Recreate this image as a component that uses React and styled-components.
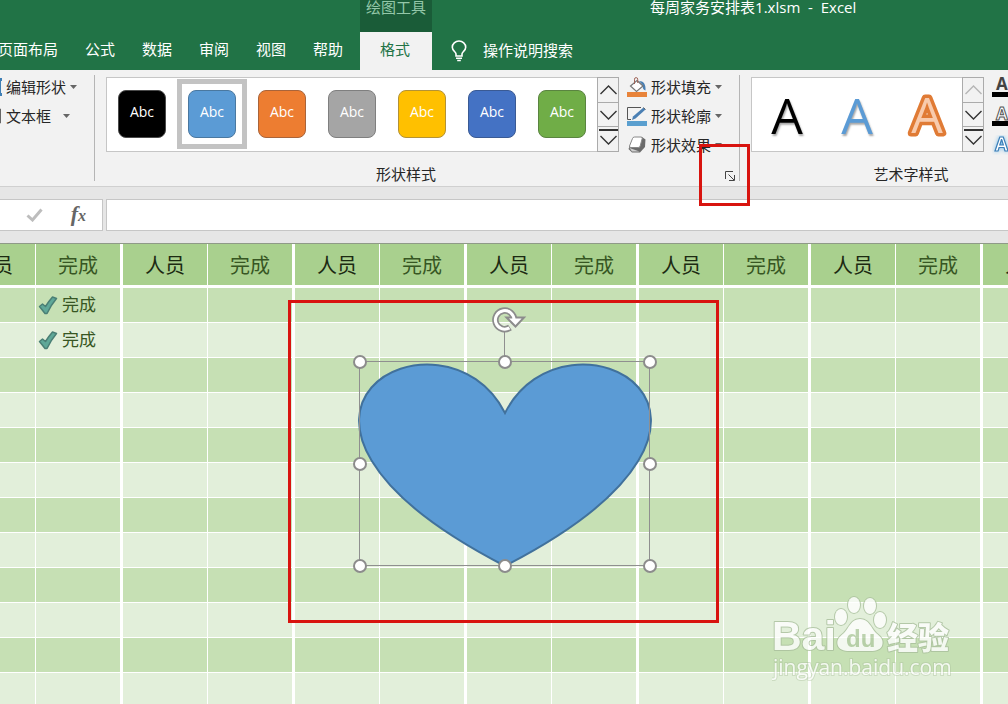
import React from 'react';
import styled, { createGlobalStyle } from 'styled-components';

const GlobalStyle = createGlobalStyle`
  * {
    box-sizing: border-box;
  }

  body {
    margin: 0;
    overflow: hidden;
    font-family: 'Open Sans', 'Noto Sans CJK SC', sans-serif;
    font-size: 15px;
    color: #262626;
  }

  button,
  input {
    font: inherit;
    color: inherit;
    border: none;
    padding: 0;
    background: none;
  }
`;

const tabs = ['页面布局', '公式', '数据', '审阅', '视图', '帮助'];

const shapeStyles = [
  { name: 'black', fill: '#000000', line: '#4a4a4a' },
  { name: 'blue', fill: '#5b9bd5', line: '#4a78a0', selected: true },
  { name: 'orange', fill: '#ed7d31', line: '#a9643a' },
  { name: 'gray', fill: '#a5a5a5', line: '#7f7f7f' },
  { name: 'gold', fill: '#ffc000', line: '#b39236' },
  { name: 'indigo', fill: '#4472c4', line: '#3a5a94' },
  { name: 'green', fill: '#70ad47', line: '#5a8440' },
];

const wordArtStyles = ['black', 'blue', 'orange'];

const columnPairs = [0, 1, 2, 3, 4, 5, 6];

const rows = [
  { id: 1, done: true },
  { id: 2, done: true },
  { id: 3 },
  { id: 4 },
  { id: 5 },
  { id: 6 },
  { id: 7 },
  { id: 8 },
  { id: 9 },
  { id: 10 },
  { id: 11 },
  { id: 12 },
];

const handles = [
  [20, 60],
  [165, 60],
  [310, 60],
  [20, 162],
  [310, 162],
  [20, 264],
  [165, 264],
  [310, 264],
];

const BulbIcon = () => (
  <svg width="16" height="22" viewBox="0 0 16 22" fill="none" stroke="#fff">
    <path
      strokeWidth="1.6"
      d="M5 16v-2.2C4.6 11.8 1.3 10.5 1.3 7.2a6.7 6.2 0 0113.4 0c0 3.3-3.3 4.6-3.7 6.6V16z"
    />
    <path strokeWidth="1.5" d="M5 18.2h6M6.2 20.6h3.6" />
  </svg>
);

const Caret = () => (
  <svg width="7" height="4" viewBox="0 0 7 4">
    <path d="M0 0h7L3.5 4z" fill="#666" />
  </svg>
);

const EditShapeIcon = () => (
  <svg width="20" height="20" viewBox="0 0 20 20" fill="none">
    <path d="M3 3h15M3 17h15M4 3v14" stroke="#8a8a8a" />
    <path d="M15 1h5v3h-5zM15 16h5v3h-5z" fill="#3f7fb5" />
    <path d="M18.500 4v12" stroke="#3f7fb5" />
  </svg>
);

const TextBoxIcon = () => (
  <svg width="20" height="20" viewBox="0 0 20 20" fill="none">
    <path d="M2 3h16.500v14H2z" fill="#fff" stroke="#666" />
  </svg>
);

const FillIcon = () => (
  <svg width="20" height="20" viewBox="0 0 20 20">
    <path d="M0 15h20v5H0z" fill="#e8833a" />
    <path d="M12 4c4.500 0 7 3 6.500 9.500-2.500-.5-3-3-3-5.500z" fill="#4a7fb3" />
    <path
      d="M10 3.500L16 9l-6.500 5.500L3.500 9z"
      fill="#fff"
      stroke="#777"
      strokeWidth="1.200"
    />
    <path d="M7.500 7V2.200a1.600 1.600 0 013.200 0V6" fill="none" stroke="#a0655a" />
  </svg>
);

const OutlineIcon = () => (
  <svg width="20" height="20" viewBox="0 0 20 20">
    <path d="M0 15h20v5H0z" fill="#5a9fcf" />
    <path d="M14 1.500H.5v12H4" fill="none" stroke="#555" />
    <path d="M16.500 1.500l2 2L8.500 12.500 5 14l1-3.500z" fill="#4a7fb3" />
    <path d="M16.500 1.500l2 2" stroke="#666" />
  </svg>
);

const EffectsIcon = () => (
  <svg width="20" height="20" viewBox="0 0 20 20">
    <path
      d="M6.500 2H15l3.500 2.500-.5 7.500-5 5.500H5L1.500 14z"
      fill="#6b6b6b"
      strokeLinejoin="round"
    />
    <path
      d="M7.500 2h6.500q1.500 0 1.200 1.500l-2 7.500q-.4 1.500-2 1.500H4q-2 0-1.500-1.500l3-7.500q.5-1.500 2-1.500z"
      fill="#fff"
      stroke="#888"
    />
    <path d="M2.500 13L5 16.500h7.500z" fill="#d0d0d0" />
  </svg>
);

const ChevronIcon = ({ up, more, muted }) => (
  <svg
    width="19"
    height="22"
    viewBox="0 0 19 22"
    fill="none"
    stroke={muted ? '#b5b5b5' : '#333'}
    strokeWidth="1.400"
  >
    {more && <path d="M0 2h19" strokeWidth="2" />}
    <path d={up ? 'M1.500 15l8-8 8 8' : more ? 'M1.500 8l8 8 8-8' : 'M1.500 7l8 8 8-8'} />
  </svg>
);

const LauncherIcon = () => (
  <svg width="10" height="10" viewBox="0 0 10 10" fill="none" stroke="#444">
    <path d="M.5 8V.5H8M3.500 3.500L9 9M9.500 4v5.500H4" />
  </svg>
);

const OrangeLetter = () => (
  <svg width="44" height="50" viewBox="0 0 44 50">
    <g fontSize="50" textAnchor="middle" strokeLinejoin="round">
      <text
        x="22"
        y="43"
        fill="#f8cbad"
        stroke="#e07b35"
        strokeWidth="7"
        paintOrder="stroke"
      >
        A
      </text>
    </g>
  </svg>
);

const TextFillIcon = () => (
  <svg width="22" height="20" viewBox="0 0 22 20">
    <text x="4" y="13" fontSize="17" fontWeight="700" fill="#444">
      A
    </text>
    <path d="M0 15h22v5H0z" />
  </svg>
);

const TextOutlineIcon = () => (
  <svg width="22" height="20" viewBox="0 0 22 20">
    <text x="4" y="14" fontSize="17" fontWeight="700" fill="#fff" stroke="#555">
      A
    </text>
    <path d="M0 15h22v5H0z" />
  </svg>
);

const TextEffectsIcon = () => (
  <svg width="22" height="20" viewBox="0 0 22 20">
    <text
      x="3"
      y="16"
      fontSize="19"
      fontWeight="700"
      fill="#fff"
      stroke="#3c7fb8"
      strokeWidth="1.200"
      style={{ filter: 'drop-shadow(0 0 2px #7fc0ea)' }}
    >
      A
    </text>
  </svg>
);

const TickIcon = () => (
  <svg width="17" height="14" viewBox="0 0 17 14" fill="none">
    <path d="M1.500 7.500l5 4.500L15.500 1.500" stroke="#bdbdbd" strokeWidth="3" />
  </svg>
);

const DoneIcon = () => (
  <svg width="20" height="20" viewBox="0 0 20 20">
    <path
      d="M1.500 11.500l3-2.500 3 2.500q3-5 7-9.500l4 1.500Q13 10 9 18.500H7z"
      fill="#5fa898"
      stroke="#4a7f75"
      strokeWidth="1.500"
      strokeLinejoin="round"
    />
  </svg>
);

const HeartShape = () => (
  <svg width="330" height="284" viewBox="0 0 330 284">
    <path
      d="M165 111C225 -8 461 111 165 264C-131 111 105 -8 165 111z"
      fill="#5b9bd5"
      stroke="#41719c"
      strokeWidth="2"
    />
    <path
      d="M19.500 59.500h290v204h-290zM164.500 59.500V30"
      fill="none"
      stroke="#8f8f8f"
    />
    <g fill="none">
      <path
        d="M174 18a9.300 9.300 0 10-4 7.500"
        stroke="#8c8c8c"
        strokeWidth="6.500"
      />
      <path d="M166.500 15.500h17.500l-8.500 9z" fill="#fff" stroke="#8c8c8c" strokeWidth="2" />
      <path
        d="M174 18a9.300 9.300 0 10-4.600 7.900"
        stroke="#fff"
        strokeWidth="3"
      />
    </g>
    {handles.map(([x, y]) => (
      <circle
        key={`${x}-${y}`}
        cx={x}
        cy={y}
        r="6"
        fill="#fff"
        stroke="#8c8c8c"
        strokeWidth="2"
      />
    ))}
  </svg>
);

const WatermarkLogo = () => (
  <svg width="184" height="88" viewBox="0 0 184 88">
    <g
      fill="#fff"
      stroke="#a9bf9c"
      strokeWidth="2"
      paintOrder="stroke"
      strokeLinejoin="round"
    >
      <text
        x="0"
        y="54"
        fontFamily="Liberation Sans, sans-serif"
        fontWeight="700"
        fontSize="41"
      >
        Bai
      </text>
      <ellipse cx="69" cy="21" rx="6" ry="8" />
      <ellipse cx="82" cy="9" rx="6" ry="8" />
      <ellipse cx="98" cy="10" rx="6" ry="8" />
      <ellipse cx="108" cy="24" rx="6" ry="8" />
      <path d="M88 23c9 0 11 9 16 14 5 4 8 7 6 13-3 6-11 5-22 5s-19 1-22-5c-2-6 1-9 6-13 5-5 7-14 16-14z" />
      <text
        x="115"
        y="53"
        fontFamily="Noto Sans CJK SC, sans-serif"
        fontWeight="900"
        fontSize="31"
      >
        经验
      </text>
    </g>
    <text
      x="74"
      y="51"
      fontFamily="Liberation Sans, sans-serif"
      fontWeight="700"
      fontSize="24"
      fill="#b3cca4"
    >
      du
    </text>
    <text
      x="1"
      y="79"
      fontFamily="Open Sans, sans-serif"
      fontSize="21"
      fill="#fff"
      stroke="#a9bf9c"
      strokeOpacity="0.500"
      strokeWidth="2"
      paintOrder="stroke"
    >
      jingyan.baidu.com
    </text>
  </svg>
);

const GalleryButtons = ({ topMuted }) => (
  <ScrollColumn>
    <ScrollButton aria-label="Previous styles">
      <ChevronIcon up muted={topMuted} />
    </ScrollButton>
    <ScrollButton aria-label="Next styles">
      <ChevronIcon />
    </ScrollButton>
    <ScrollButton aria-label="More styles">
      <ChevronIcon more />
    </ScrollButton>
  </ScrollColumn>
);

export default function App() {
  return (
    <Window>
      <GlobalStyle />
      <Header>
        <Tabs>
          {tabs.map((tab) => (
            <Tab key={tab}>{tab}</Tab>
          ))}
        </Tabs>
        <ContextTabs>
          <ContextTitle>绘图工具</ContextTitle>
          <ActiveTab>格式</ActiveTab>
        </ContextTabs>
        <HeaderRight>
          <Title>每周家务安排表1.xlsm&nbsp; -&nbsp; Excel</Title>
          <Search>
            <BulbIcon />
            <SearchInput aria-label="操作说明搜索" placeholder="操作说明搜索" />
          </Search>
        </HeaderRight>
      </Header>

      <Ribbon>
        <InsertGroup>
          <Command>
            <EditShapeIcon />
            编辑形状
            <Caret />
          </Command>
          <Command $wide>
            <TextBoxIcon />
            文本框
            <Caret />
          </Command>
        </InsertGroup>
        <Separator />
        <Group>
          <GroupBody>
            <Gallery>
              {shapeStyles.map((item) => (
                <ShapeOption key={item.name} $selected={item.selected}>
                  <Swatch $fill={item.fill} $line={item.line}>
                    Abc
                  </Swatch>
                </ShapeOption>
              ))}
              <GalleryButtons />
            </Gallery>
            <Commands>
              <Command>
                <FillIcon />
                形状填充
                <Caret />
              </Command>
              <Command>
                <OutlineIcon />
                形状轮廓
                <Caret />
              </Command>
              <Command>
                <EffectsIcon />
                形状效果
                <Caret />
              </Command>
            </Commands>
          </GroupBody>
          <GroupFooter>
            <GroupLabel>形状样式</GroupLabel>
            <Launcher aria-label="形状样式">
              <LauncherIcon />
              <LauncherMark />
            </Launcher>
          </GroupFooter>
        </Group>
        <Separator />
        <WordArtGroup>
          <GroupBody>
            <Gallery>
              {wordArtStyles.map((name) => (
                <WordArtOption key={name} className={name}>
                  {name === 'orange' ? <OrangeLetter /> : 'A'}
                </WordArtOption>
              ))}
              <GalleryButtons topMuted />
            </Gallery>
            <Commands>
              <Command aria-label="文本填充">
                <TextFillIcon />
              </Command>
              <Command aria-label="文本轮廓">
                <TextOutlineIcon />
              </Command>
              <Command aria-label="文本效果">
                <TextEffectsIcon />
              </Command>
            </Commands>
          </GroupBody>
          <GroupFooter>
            <GroupLabel>艺术字样式</GroupLabel>
          </GroupFooter>
        </WordArtGroup>
      </Ribbon>

      <FormulaBar>
        <FormulaButtons>
          <FormulaButton aria-label="Enter">
            <TickIcon />
          </FormulaButton>
          <FormulaButton>
            <Fx>
              f<small>x</small>
            </Fx>
          </FormulaButton>
        </FormulaButtons>
        <FormulaInput aria-label="Formula" />
      </FormulaBar>

      <Sheet>
        <Table>
          <thead>
            <tr>
              {columnPairs.map((pair) => (
                <React.Fragment key={pair}>
                  <Th>人员</Th>
                  <Th $done>完成</Th>
                </React.Fragment>
              ))}
            </tr>
          </thead>
          <tbody>
            {rows.map((row) => (
              <Row key={row.id}>
                {columnPairs.map((pair) => (
                  <React.Fragment key={pair}>
                    <Td />
                    <Td $done>
                      {row.done && pair === 0 && (
                        <Done>
                          <DoneIcon />
                          完成
                        </Done>
                      )}
                    </Td>
                  </React.Fragment>
                ))}
              </Row>
            ))}
          </tbody>
        </Table>
        <ShapeLayer>
          <HeartShape />
        </ShapeLayer>
        <ShapeMark />
      </Sheet>
      <Watermark>
        <WatermarkLogo />
      </Watermark>
    </Window>
  );
}

const Window = styled.div`
  position: relative;
  display: flex;
  flex-direction: column;
  height: 100vh;
  overflow: hidden;
  background-color: #e6e6e6;
`;

const Header = styled.header`
  display: flex;
  align-items: flex-end;
  background-color: #217346;
  color: white;
`;

const Tabs = styled.nav`
  display: flex;
  gap: 27px;
  margin: 0 17px 0 -2px;
`;

const Tab = styled.button`
  height: 38px;
  line-height: 32px;
  padding-bottom: 4px;
  white-space: nowrap;
`;

const ContextTabs = styled.div`
  width: 72px;
  background-color: #1a5c38;
`;

const ContextTitle = styled.div`
  height: 32px;
  line-height: 14px;
  text-align: center;
  color: #93c7a8;
`;

const ActiveTab = styled.button`
  display: block;
  width: 100%;
  height: 38px;
  line-height: 32px;
  padding: 0 2px 4px 0;
  background-color: #f2f2f2;
  color: #217346;
`;

const HeaderRight = styled.div`
  flex: 1;
`;

const Title = styled.div`
  height: 32px;
  padding-left: 218px;
  line-height: 14px;
  white-space: nowrap;
`;

const Search = styled.label`
  display: flex;
  align-items: center;
  gap: 16px;
  height: 38px;
  padding-left: 19px;
`;

const SearchInput = styled.input`
  width: 180px;
  height: 32px;
  margin-bottom: 2px;
  outline: none;

  &::placeholder {
    color: white;
    opacity: 1;
  }
`;

const Ribbon = styled.div`
  display: flex;
  background-color: #f2f2f2;
  border-bottom: 1px solid #d0d0d0;
`;

const Separator = styled.div`
  flex: none;
  width: 1px;
  margin: 5px 0;
  background-color: #b5b5b5;
`;

const Group = styled.section`
  flex: none;
  width: 644px;
  padding: 2px 0 0 11px;
`;

const InsertGroup = styled(Group)`
  width: 112px;
  margin-left: -18px;
  padding-left: 0;
`;

const WordArtGroup = styled(Group)`
  width: 342px;
`;

const GroupBody = styled.div`
  display: flex;
  align-items: flex-start;
  height: 89px;
`;

const GroupFooter = styled.div`
  display: flex;
  align-items: center;
  height: 25px;
  margin-left: -11px;
`;

const GroupLabel = styled.div`
  flex: 1;
  line-height: 24px;
  text-align: center;
`;

const Launcher = styled.button`
  position: relative;
  display: flex;
  align-items: center;
  width: 10px;
  height: 14px;
  margin: 4px 4px 0 8px;
`;

const LauncherMark = styled.span`
  position: absolute;
  top: -25px;
  left: -26px;
  z-index: 2;
  width: 51px;
  height: 62px;
  border: 3px solid #d8140f;
  pointer-events: none;
`;

const Gallery = styled.div`
  display: flex;
  height: 75px;
  margin-top: 5px;
  background-color: white;
  border: 1px solid #c6c6c6;
`;

const ShapeOption = styled.button`
  display: flex;
  align-items: center;
  justify-content: center;
  width: 70px;
  height: 70px;
  margin-top: 1px;
  border: 5px solid ${(props) => (props.$selected ? '#c3c3c3' : 'transparent')};
`;

const Swatch = styled.span`
  width: 48px;
  height: 48px;
  flex: none;
  border: 1px solid ${(props) => props.$line};
  border-radius: 8px;
  background-color: ${(props) => props.$fill};
  color: white;
  font-size: 14px;
  line-height: 42px;
`;

const WordArtOption = styled.button`
  display: flex;
  align-items: center;
  justify-content: center;
  width: 70px;
  font-size: 50px;
  line-height: 72px;
  text-shadow: 1px 2px 2px rgba(0, 0, 0, 0.35);

  &.black {
    color: black;
  }

  &.blue {
    color: #5b9bd5;
  }

  &.orange {
    text-shadow: none;
  }
`;

const ScrollColumn = styled.div`
  display: flex;
  flex-direction: column;
  width: 22px;
  margin: -1px -1px -1px 0;
  border: 1px solid #ababab;
  background-color: #f2f2f2;
`;

const ScrollButton = styled.button`
  display: flex;
  flex: 1;
  align-items: center;
  justify-content: center;

  & + & {
    border-top: 1px solid #ababab;
  }
`;

const Commands = styled.div`
  margin-left: 8px;
`;

const Command = styled.button`
  display: flex;
  align-items: center;
  gap: 4px;
  height: 29px;
  white-space: nowrap;

  svg:last-child:not(:first-child) {
    margin-left: ${(props) => (props.$wide ? '8px' : '0')};
  }
`;

const FormulaBar = styled.div`
  display: flex;
  gap: 3px;
  padding: 12px 0;
`;

const FormulaButtons = styled.div`
  display: flex;
  align-items: center;
  justify-content: flex-end;
  gap: 28px;
  width: 103px;
  height: 32px;
  padding-right: 16px;
  background-color: white;
  border: 1px solid #c6c6c6;
  border-left: none;
`;

const FormulaButton = styled.button`
  display: flex;
  align-items: center;
`;

const Fx = styled.span`
  color: #666;
  font-family: 'Liberation Serif', serif;
  font-size: 22px;
  font-style: italic;
  font-weight: 700;
  line-height: 24px;

  small {
    font-size: 16px;
  }
`;

const FormulaInput = styled.input`
  flex: 1;
  height: 32px;
  padding: 0 8px;
  background-color: white;
  border: 1px solid #c6c6c6;
  border-right: none;
  outline: none;
`;

const Sheet = styled.main`
  position: relative;
  flex: 1;
  overflow: hidden;
  border-top: 1px solid #8f9a88;
`;

const Table = styled.table`
  width: 1204px;
  margin-left: -49px;
  table-layout: fixed;
  border-collapse: separate;
  border-spacing: 0;
`;

const Th = styled.th`
  width: ${(props) => (props.$done ? '87px' : '85px')};
  height: 44px;
  padding: 2px 0 0;
  background-color: #a9d08e;
  border-right: ${(props) => (props.$done ? '3px' : '1px')} solid white;
  border-bottom: 3px solid white;
  color: ${(props) => (props.$done ? '#375623' : '#1c2a12')};
  font-size: 20px;
  font-weight: 400;
  line-height: 28px;
`;

const Row = styled.tr`
  background-color: #e2efda;

  &:nth-child(odd) {
    background-color: #c6e0b4;
  }
`;

const Td = styled.td`
  height: 35px;
  padding: 0 0 0 2px;
  border-right: ${(props) => (props.$done ? '3px' : '1px')} solid white;
  border-bottom: 1px solid white;
`;

const Done = styled.div`
  display: flex;
  align-items: center;
  gap: 4px;
  color: #375623;
  font-size: 17px;
  line-height: 24px;
`;

const ShapeLayer = styled.div`
  position: absolute;
  top: 58px;
  left: 340px;
`;

const ShapeMark = styled.div`
  position: absolute;
  top: 56px;
  left: 288px;
  width: 431px;
  height: 323px;
  border: 3px solid #d8140f;
`;

const Watermark = styled.div`
  position: absolute;
  right: 52px;
  bottom: 16px;
  height: 92px;
  opacity: 0.8;
`;
